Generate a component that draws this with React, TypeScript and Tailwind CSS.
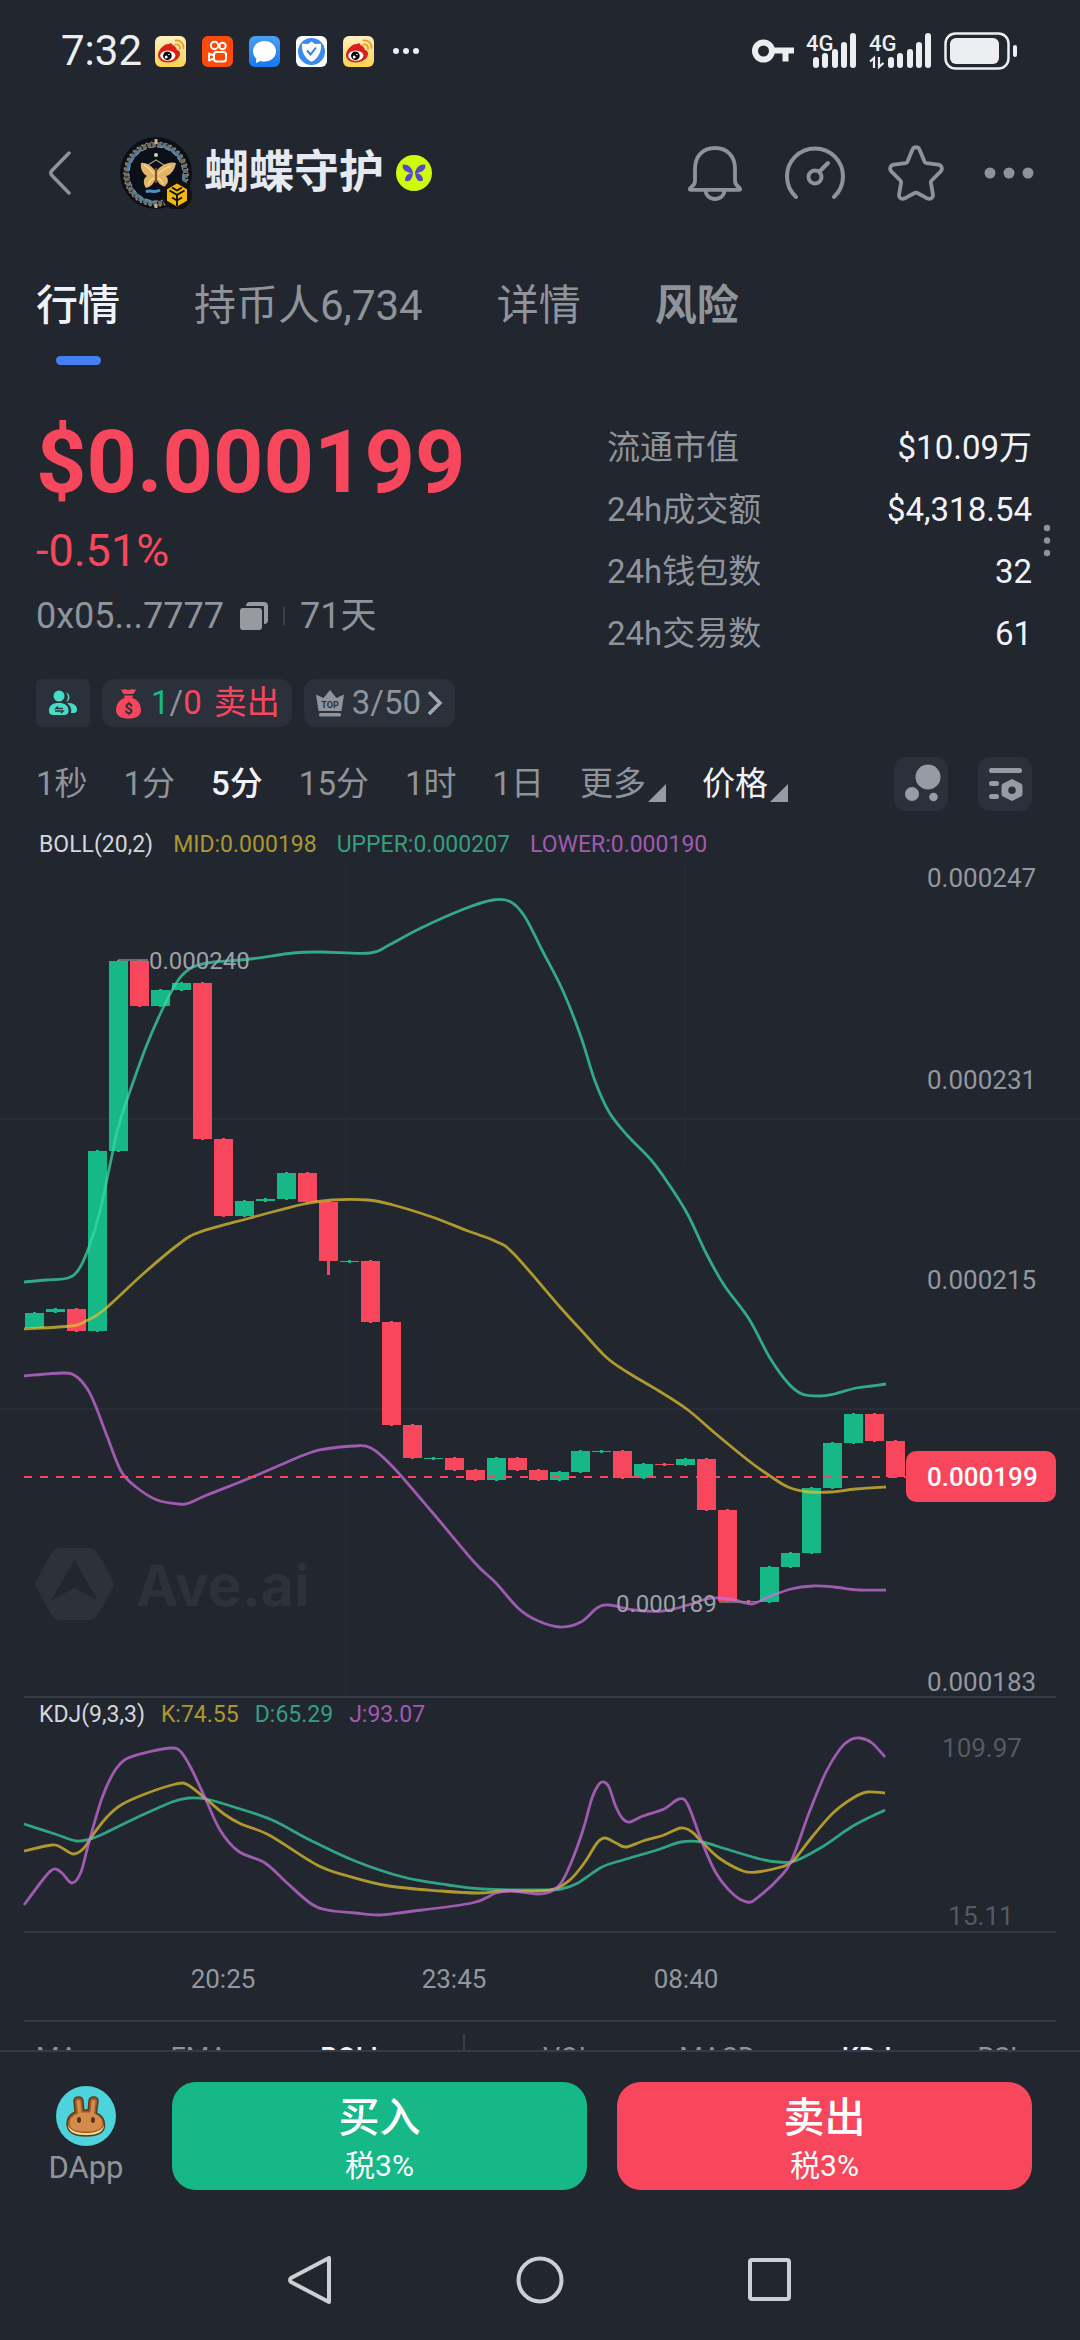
import React from "react";

type Pt = [number, number];

/* Smooth curve through the sample points (Catmull-Rom converted to Béziers). */
function smooth(points: Pt[]): string {
  let d = `M${points[0][0]} ${points[0][1]}`;
  for (let i = 0; i < points.length - 1; i++) {
    const p0 = points[i - 1] ?? points[i];
    const p1 = points[i];
    const p2 = points[i + 1];
    const p3 = points[i + 2] ?? p2;
    const c1x = p1[0] + (p2[0] - p0[0]) / 6;
    const c1y = p1[1] + (p2[1] - p0[1]) / 6;
    const c2x = p2[0] - (p3[0] - p1[0]) / 6;
    const c2y = p2[1] - (p3[1] - p1[1]) / 6;
    d += `C${c1x.toFixed(1)} ${c1y.toFixed(1)} ${c2x.toFixed(1)} ${c2y.toFixed(1)} ${p2[0]} ${p2[1]}`;
  }
  return d;
}

const GREEN = "#15b886";
const RED = "#f8475d";

/* top, bottom, direction, optional lower wick */
const candles: [number, number, "u" | "d", number?][] = [
  [453, 468, "u"], [449, 452, "u"], [449, 471, "d"], [291, 471, "u"], [101, 291, "u"],
  [101, 146, "d"], [130, 146, "u"], [123, 130, "u"], [123, 279, "d"], [279, 356, "d"],
  [341, 356, "u"], [339, 341, "u"], [313, 339, "u"], [313, 342, "d"], [342, 401, "d", 415],
  [401, 402, "u"], [401, 462, "d"], [462, 565, "d"], [565, 598, "d"], [598, 599, "u"],
  [598, 610, "d"], [610, 620, "d"], [598, 620, "u"], [598, 610, "d"], [610, 620, "d"],
  [612, 620, "u"], [591, 612, "u"], [591, 592, "u"], [591, 618, "d"], [604, 618, "u"],
  [604, 605, "d"], [599, 605, "u"], [599, 650, "d"], [650, 741, "d"], [741, 742, "d"],
  [707, 742, "u"], [693, 707, "u"], [628, 693, "u"], [583, 628, "u"], [554, 583, "u"],
  [554, 581, "d"], [581, 617, "d"],
];

const upper: Pt[] = [
  [24, 422], [46, 420], [68, 418], [79, 409], [89, 387], [100, 351], [111, 300], [118, 268], [129, 234],
  [146, 187], [164, 146], [179, 119], [193, 107], [214, 102], [250, 99], [293, 93], [321, 92], [370, 93],
  [389, 85], [421, 68], [464, 49], [493, 40], [511, 42], [525, 57], [542, 90], [563, 131], [581, 177],
  [595, 221], [609, 252], [627, 275], [652, 301], [670, 326], [688, 355], [706, 393], [724, 425],
  [749, 459], [770, 498], [788, 523], [802, 534], [820, 536], [834, 534], [856, 528], [872, 526], [886, 524],
];
const mid: Pt[] = [
  [24, 469], [71, 466], [86, 461], [104, 450], [143, 414], [179, 384], [200, 372], [250, 358], [304, 344],
  [332, 340], [368, 340], [393, 345], [432, 357], [468, 371], [495, 381], [514, 394], [560, 447],
  [581, 470], [606, 497], [627, 512], [659, 531], [688, 550], [716, 574], [749, 601], [770, 616],
  [788, 627], [809, 632], [831, 632], [856, 629], [886, 627],
];
const lower: Pt[] = [
  [24, 516], [64, 513], [77, 517], [88, 530], [96, 547], [107, 576], [121, 611], [136, 627], [157, 640],
  [179, 644], [189, 643], [207, 635], [250, 618], [304, 595], [325, 589], [354, 586], [371, 588],
  [393, 607], [432, 652], [475, 703], [495, 722], [518, 748], [536, 760], [560, 767], [581, 762],
  [597, 748], [609, 745], [634, 750], [663, 751], [688, 745], [706, 739], [720, 738], [734, 740],
  [752, 744], [766, 738], [791, 729], [813, 726], [834, 727], [859, 730], [886, 730],
];
const kLine: Pt[] = [
  [24, 153], [52, 147], [62, 150], [73, 156], [83, 151], [95, 134], [107, 119], [121, 107], [145, 96],
  [176, 86], [188, 87], [206, 101], [224, 116], [241, 126], [269, 137], [317, 167], [348, 178],
  [389, 188], [441, 193], [479, 195], [503, 193], [540, 193], [557, 190], [571, 181], [585, 164],
  [597, 145], [605, 140], [616, 145], [626, 149], [643, 143], [664, 137], [681, 130], [692, 134],
  [702, 144], [719, 160], [743, 173], [757, 174], [781, 169], [793, 163], [812, 139], [833, 115],
  [853, 100], [867, 94], [885, 95],
];
const dLine: Pt[] = [
  [24, 126], [55, 136], [76, 143], [90, 141], [103, 136], [138, 119], [172, 104], [189, 100], [206, 101],
  [234, 109], [272, 122], [310, 142], [355, 163], [403, 179], [448, 187], [482, 191], [540, 192],
  [561, 191], [578, 185], [602, 169], [623, 162], [657, 152], [681, 144], [702, 144], [726, 151],
  [760, 161], [778, 164], [795, 163], [822, 149], [853, 128], [885, 112],
];
const jLine: Pt[] = [
  [24, 207], [45, 179], [54, 171], [62, 175], [72, 185], [81, 174], [89, 144], [102, 100], [114, 74],
  [126, 61], [148, 54], [172, 50], [181, 54], [191, 70], [206, 102], [220, 132], [238, 153], [265, 165],
  [286, 184], [310, 205], [327, 212], [355, 215], [379, 217], [406, 214], [472, 205], [496, 195],
  [513, 193], [537, 196], [550, 194], [561, 185], [571, 165], [583, 132], [592, 100], [599, 86],
  [604, 84], [609, 89], [616, 109], [623, 121], [630, 124], [643, 118], [664, 111], [679, 101],
  [688, 107], [702, 144], [716, 175], [733, 196], [747, 204], [757, 200], [781, 178], [793, 159],
  [809, 115], [826, 74], [840, 51], [850, 42], [860, 40], [872, 45], [885, 59],
];

const Weibo = () => (
  <svg viewBox="0 0 31 31" className="size-[31px]">
    <defs>
      <linearGradient id="wb" x1="0" y1="0" x2="0" y2="1">
        <stop offset="0" stopColor="#fff0c4" />
        <stop offset="1" stopColor="#fdd24f" />
      </linearGradient>
    </defs>
    <rect width="31" height="31" rx="6" fill="url(#wb)" />
    <path d="M3 19c0-5 6-11 10-11 2.500 0 3 2 2.300 3.500 2.500-1.200 7-1.200 6.200 2.300 2 .6 3.500 1.700 3.500 4C25 23 19 26.500 13 26.500S3 23.500 3 19z" fill="#dd1f1c" />
    <path d="M14 8c1.500-1.500 3.500-1 3.500 1.500 1 -.5 3 0 2.500 3l-6 1z" fill="#dd1f1c" />
    <ellipse cx="12.800" cy="19.600" rx="7.600" ry="5.200" fill="#fff" />
    <circle cx="12.400" cy="19.800" r="4.300" fill="#000" />
    <circle cx="11.200" cy="21" r="1.500" fill="#fff" />
    <circle cx="14" cy="18.500" r=".8" fill="#fff" />
    <path d="M20.500 8.500c3-.5 5 1.500 4.500 4.500M20.500 4.500c5-.7 8.500 3 8 7.500" fill="none" stroke="#f39a1f" strokeWidth="1.800" strokeLinecap="round" />
  </svg>
);

const Kuaishou = () => (
  <svg viewBox="0 0 31 31" className="size-[31px]">
    <rect width="31" height="31" rx="6" fill="#fb4a0c" />
    <g fill="none" stroke="#fff" strokeWidth="2">
      <circle cx="12.500" cy="9.500" r="3.700" />
      <circle cx="20.500" cy="10" r="3.200" />
      <rect x="12" y="16" width="12" height="9.500" rx="2.500" />
      <path d="M12 19.500 7 17.500v7l5-2z" strokeLinejoin="round" />
    </g>
  </svg>
);

const ChatApp = () => (
  <svg viewBox="0 0 31 31" className="size-[31px]">
    <defs>
      <linearGradient id="ch" x1="0" y1="0" x2="0" y2="1">
        <stop offset="0" stopColor="#4d9df5" />
        <stop offset="1" stopColor="#1678f2" />
      </linearGradient>
    </defs>
    <rect width="31" height="31" rx="6" fill="url(#ch)" />
    <path d="M15.500 5C22 5 27 9.500 27 15.300S22 25.500 15.500 25.500c-1.500 0-2.800-.2-4-.6L7 27l.3-4.200C5.300 21 4 18.500 4 15.300 4 9.500 9 5 15.500 5z" fill="#fff" />
  </svg>
);

const ShieldApp = () => (
  <svg viewBox="0 0 31 31" className="size-[31px]">
    <rect width="31" height="31" rx="6" fill="#fff" />
    <circle cx="15.500" cy="15.500" r="13.500" fill="#3a8af0" />
    <path d="M15.500 5.500 19 8l6-.3c.8 7-2.500 15-9.500 18C8.500 22.700 5.200 14.700 6 7.700L12 8z" fill="#fff" />
    <path d="m11 14.500 3.500 4 5.500-7" fill="none" stroke="#2f80ed" strokeWidth="2" />
  </svg>
);

const Signal = ({ data }: { data?: boolean }) => {
  const x = data ? 19 : 7;
  return (
    <svg viewBox={data ? "0 -6 63 48" : "0 -6 51 48"} className={data ? "h-12 w-[63px]" : "h-12 w-[51px]"}>
      <text x="0" y="18" fontSize="22" fontWeight="500" fill="#eceef2">4G</text>
      <g fill="#eceef2">
        <rect x={x} y="24" width="6" height="11" rx="3" />
        <rect x={x + 9} y="20" width="6" height="15" rx="3" />
        <rect x={x + 19} y="16" width="6" height="19" rx="3" />
        <rect x={x + 28} y="9" width="6" height="26" rx="3" />
        <rect x={x + 37} y="0" width="6" height="35" rx="3" />
      </g>
      {data && <path d="M1 28.500 5 25v10M10 24v10l4.500-4" fill="none" stroke="#eceef2" strokeWidth="2.200" />}
    </svg>
  );
};

function StatusBar() {
  return (
    <div className="flex items-center justify-between pt-[26px] pr-[62px] pl-[61px] text-[#eceef2]">
      <div className="flex items-center">
        <span className="mr-[13px] text-[42px] leading-[50px]">7:32</span>
        <div className="flex items-center gap-4">
          <Weibo />
          <Kuaishou />
          <ChatApp />
          <ShieldApp />
          <Weibo />
        </div>
        <svg viewBox="0 0 30 8" className="ml-[17px] h-2 w-[30px]" fill="#eceef2">
          <circle cx="5" cy="4" r="3" />
          <circle cx="15" cy="4" r="3" />
          <circle cx="25" cy="4" r="3" />
        </svg>
      </div>
      <div className="flex items-center gap-3">
        <svg viewBox="0 0 42 24" className="h-6 w-[42px]">
          <circle cx="11.500" cy="12" r="8.500" fill="none" stroke="#eceef2" strokeWidth="6" />
          <path d="M20 8.500h22v6h-5.500v8h-6v-8H20z" fill="#eceef2" />
        </svg>
        <Signal />
        <Signal data />
        <svg viewBox="0 0 74 38" className="h-[38px] w-[74px]">
          <rect x="1.500" y="1.500" width="63" height="35" rx="10" fill="none" stroke="#eceef2" strokeWidth="2.500" />
          <rect x="6" y="6" width="49" height="26" rx="6" fill="#eceef2" />
          <rect x="69" y="13" width="4" height="12" rx="2" fill="#eceef2" />
        </svg>
      </div>
    </div>
  );
}

const Avatar = () => (
  <svg viewBox="0 0 72 72" className="size-[72px]">
    <circle cx="36" cy="36" r="36" fill="#0b0f19" />
    <circle cx="36" cy="37" r="29.500" fill="none" stroke="#6f6c62" strokeWidth="5" strokeDasharray="4 1" />
    <circle cx="36" cy="37" r="32" fill="none" stroke="#9a8b68" strokeWidth="1.500" strokeDasharray="2 3" />
    <circle cx="36" cy="37" r="28.500" fill="none" stroke="#4d7fa3" strokeWidth="2.500" strokeDasharray="26 20" />
    <circle cx="36" cy="37" r="27" fill="none" stroke="#8f9aa0" strokeWidth="1" strokeDasharray="5 3" />
    <path d="M36 2v5M36 67v4" stroke="#c9b078" strokeWidth="3" />
    <path d="M26 55c4-3 8 2 14-2" fill="none" stroke="#4b8fc4" strokeWidth="3" />
    <circle cx="36" cy="18" r="2" fill="#d9cfae" />
    <path d="m28 28 8-5 8 5" fill="none" stroke="#a39a83" strokeWidth="1.200" />
    <path d="M35.500 34C31 28 25 25 21 26c-1 6 2 11 6 13-4 2-4 8-1 12 5-1 8-5 9.500-9zM36.500 34C41 28 49 24 56 26c-1 6-5 12-10 13 3 3 2 7 0 11-5-1-8-4-9.500-8z" fill="#e2b565" />
    <path d="M34 37c-3-4-6-7-10-9M38 37c4-4 8-6 13-8M34 41c-3 1-5 4-6 7M38 41c3 1 4 4 5 6" fill="none" stroke="#f5dfa4" strokeWidth="1.300" />
    <path d="M36 31v15" stroke="#7b5526" strokeWidth="1.800" />
    <circle cx="57" cy="58" r="15" fill="#14110b" />
    <path d="m57 46.500 10 5.700v11.600l-10 5.700-10-5.700V52.200z" fill="#f0b90b" />
    <path d="m49.500 53.500 7.500 4.300 7.500-4.300M57 58v5M52 60.500l5 3 5-3M57 64v5M52 50.500l5 3 5-3" fill="none" stroke="#14110b" strokeWidth="1.900" />
  </svg>
);

function TitleBar() {
  return (
    <header className="mt-[61px] flex items-center justify-between pr-[46px] pl-12">
      <div className="flex items-center">
        <button aria-label="返回" className="mr-[49px]">
          <svg viewBox="0 0 23 44" className="h-11 w-[23px]" fill="none" stroke="#8f949b" strokeWidth="3.500" strokeLinecap="round" strokeLinejoin="round">
            <path d="M21 2 4 19.500q-2.500 2.500 0 5L21 42" />
          </svg>
        </button>
        <Avatar />
        <h1 className="ml-[12px] text-[45px] leading-[54px] font-bold text-[#e7e9f0]">蝴蝶守护</h1>
        <svg viewBox="0 0 36 36" className="ml-[12px] size-9">
          <circle cx="18" cy="18" r="18" fill="#cdfb0a" />
          <g fill="#5847c9">
            <path d="M17 18c-1-6-5-9-10-8.500-1.500 4 2 7.500 8 8.500zM19 18c1-6 5-9 10-8.500 1.500 4-2 7.500-8 8.500zM17 18c-5 0-8 3-8 7.500 3.500 2 7 0 8-7.500zM19 18c5 0 8 3 8 7.500-3.500 2-7 0-8-7.500z" />
          </g>
          <path d="M18 12v12" stroke="#cdfb0a" strokeWidth="1.800" />
        </svg>
      </div>
      <div className="flex items-center gap-10">
        <div className="flex items-center gap-[43px]">
          <button aria-label="提醒">
            <svg viewBox="0 0 54 56" className="h-14 w-[54px]" fill="none" stroke="#8f929d" strokeWidth="3.800" strokeLinejoin="round">
              <path d="M7 24C7 11 15 3 27 3s20 8 20 21v12c0 3 1 4 3.500 6 3 2.500 1.500 2.800 0 2.800h-47c-1.500 0-3-.3 0-2.800C6 40 7 39 7 36z" />
              <path d="M17.500 45c0 5 4 9 9.500 9s9.500-4 9.500-9" />
            </svg>
          </button>
          <button aria-label="仪表盘">
            <svg viewBox="0 0 60 56" className="h-14 w-[60px]" fill="none" stroke="#8f929d" strokeWidth="4" strokeLinecap="round">
              <path d="M11 52A28 28 0 1 1 49 52" />
              <circle cx="30" cy="32" r="6.500" />
              <path d="m35 26 8-8" />
            </svg>
          </button>
          <button aria-label="收藏">
            <svg viewBox="0 0 56 56" className="size-14" fill="none" stroke="#8f929d" strokeWidth="3.800" strokeLinejoin="round">
              <path d="M24.500 4.500c1.500-3 5.500-3 7 0l5 12c.4 1 1 1.400 2 1.600l11.500 1.600c4 .6 5 4.500 2.500 7L43.600 35.500c-.7.7-.9 1.300-.7 2.300l2 11.500c.6 3.700-2.700 5.500-5.700 4L29.500 48c-1-.6-2-.6-3 0l-9.700 5.300c-3 1.500-6.300-.3-5.700-4l2-11.500c.2-1 0-1.600-.7-2.300L3.500 26.700c-2.500-2.500-1.500-6.400 2.500-7l11.500-1.600c1-.2 1.600-.6 2-1.600z" />
            </svg>
          </button>
        </div>
        <button aria-label="更多">
          <svg viewBox="0 0 50 12" className="h-3 w-[50px]" fill="#8f929d">
            <circle cx="6" cy="6" r="5.500" />
            <circle cx="25" cy="6" r="5.500" />
            <circle cx="44" cy="6" r="5.500" />
          </svg>
        </button>
      </div>
    </header>
  );
}

function Tabs() {
  return (
    <nav className="mt-[72px] flex gap-[74px] pl-9 text-[42px] leading-[50px] font-medium text-[#8f949b]">
      <button className="flex flex-col items-center text-[#f0f2fa]">
        行情
        <span className="mt-[25px] h-[9px] w-[45px] rounded-full bg-[#4480f2]" />
      </button>
      <button className="self-start font-normal">持币人6,734</button>
      <button className="self-start font-normal">详情</button>
      <button className="self-start font-bold">风险</button>
    </nav>
  );
}

const stats: [string, string][] = [
  ["流通市值", "$10.09万"],
  ["24h成交额", "$4,318.54"],
  ["24h钱包数", "32"],
  ["24h交易数", "61"],
];

function Summary() {
  return (
    <section className="mt-[52px] flex pr-[29px] pl-9">
      <div className="flex-[571] pt-[3px]">
        <div className="text-[88px] leading-[84px] font-bold text-[#f8475d]">$0.000199</div>
        <div className="mt-[22px] text-[45px] leading-[50px] text-[#f8475d]">-0.51%</div>
        <div className="mt-5 flex items-center text-[36px] leading-[40px] text-[#8f949b]">
          <span>0x05...7777</span>
          <button aria-label="复制地址" className="ml-4">
            <svg viewBox="0 0 28 28" className="size-7" fill="#979ba1">
              <rect x="0" y="6" width="22" height="22" rx="3" />
              <path d="M6 4q0-4 4-4h14q4 0 4 4v14q0 4-4 4V5q0-1-1-1z" />
            </svg>
          </button>
          <span className="mx-[15px] h-[18px] w-[2px] bg-[#3a4049]" />
          <span>71天</span>
        </div>
      </div>
      <dl className="flex-[425] text-[33px] leading-[62px]">
        {stats.map(([k, v]) => (
          <div key={k} className="flex justify-between">
            <dt className="text-[#8f949b]">{k}</dt>
            <dd className="text-[#f0f2fa]">{v}</dd>
          </div>
        ))}
      </dl>
      <button aria-label="更多数据" className="ml-[11px] self-center">
        <svg viewBox="0 0 8 34" className="h-[34px] w-2" fill="#8f929d">
          <circle cx="4" cy="4" r="3.200" />
          <circle cx="4" cy="16.500" r="3.200" />
          <circle cx="4" cy="29" r="3.200" />
        </svg>
      </button>
    </section>
  );
}

function Chips() {
  return (
    <div className="mt-[14px] flex gap-3 pl-9 text-[33px] leading-[48px] text-[#8f949b]">
      <button aria-label="持有人" className="flex w-[54px] items-center justify-center rounded-md bg-[#2b313b]">
        <svg viewBox="0 0 28 26" className="h-[26px] w-7" fill="#46dcc8">
          <path d="M17 2.500a5 5 0 0 1 0 9.500 7 7 0 0 0 0-9.500zM20 13c5 0 8 3 8 6.500 0 3-1.500 3.500-6 3.500 1-4-.5-7.500-4-9.500z" />
          <circle cx="10" cy="6" r="5.500" />
          <path d="M9.500 13c6.500 0 10 2.500 10 7.500 0 3.500-1.500 4.500-5 4.500H5c-3.500 0-5-1-5-4.500C0 15.500 3.500 13 9.500 13z" />
          <path d="M14 18.500H7l2-2M6 21h8l-2 2" fill="none" stroke="#2b313b" strokeWidth="1.600" />
        </svg>
      </button>
      <button className="flex items-center rounded-xl bg-[#2b313b] pr-3 pl-[14px]">
        <svg viewBox="0 0 25 31" className="mr-[10px] h-[31px] w-[25px]">
          <path d="M5 1q2 1.500 4 0 3.500 2 7 0 2 1.500 4 0-.5 3.500-3 5H8Q5.500 4.500 5 1zM8 7.500h9q0 1.500-1 2 9 4 9 12.500c0 6-5 8.500-12.500 8.500S0 28 0 22Q0 13.500 9 9.500q-1-.5-1-2z" fill="#f8475d" />
          <text x="12.500" y="25.500" fontSize="15" fontWeight="700" textAnchor="middle" fill="#2b313b">$</text>
        </svg>
        <span className="text-[#15b886]">1</span>
        <span>/</span>
        <span className="text-[#f8475d]">0</span>
        <span className="ml-3 text-[#f8475d]">卖出</span>
      </button>
      <button className="flex items-center rounded-xl bg-[#2b313b] pr-3 pl-3">
        <svg viewBox="0 0 28 28" className="mr-2 h-7 w-7">
          <path d="M0 5.500 7.500 9 14 1l6.500 8L28 5.500 25.500 22h-23z" fill="#8f949b" />
          <rect x="3" y="24" width="22" height="3.500" rx="1.500" fill="#8f949b" />
          <text x="14" y="18.500" fontSize="9" fontWeight="700" textAnchor="middle" fill="#2b313b">TOP</text>
        </svg>
        <span>3/50</span>
        <svg viewBox="0 0 16 26" className="ml-[6px] h-[26px] w-4" fill="none" stroke="#a3a7ae" strokeWidth="3.500">
          <path d="m2 2 11 11L2 24" />
        </svg>
      </button>
    </div>
  );
}

const Corner = () => (
  <svg viewBox="0 0 18 18" className="ml-[2px] size-[18px] self-end" fill="#979ba3">
    <path d="M18 0v18H0z" />
  </svg>
);

function Timeframes() {
  return (
    <div className="mt-[30px] flex items-center justify-between pr-12 pl-9 text-[33px] leading-[36px] text-[#8f949b]">
      <div className="flex items-center gap-9">
        <button>1秒</button>
        <button>1分</button>
        <button className="font-medium text-[#f0f2fa]">5分</button>
        <button>15分</button>
        <button>1时</button>
        <button>1日</button>
        <button className="flex">更多<Corner /></button>
        <button className="flex text-[#f0f2fa]">价格<Corner /></button>
      </div>
      <div className="flex gap-[30px]">
        <button aria-label="气泡图" className="rounded-xl bg-[#2b313b]">
          <svg viewBox="0 0 54 54" className="size-[54px]" fill="#979ca4">
            <circle cx="34" cy="20" r="12.500" />
            <circle cx="18" cy="37" r="7" />
            <circle cx="39.500" cy="40" r="4.300" />
          </svg>
        </button>
        <button aria-label="图表设置" className="rounded-xl bg-[#2b313b]">
          <svg viewBox="0 0 54 54" className="size-[54px]" fill="#979ca4">
            <rect x="11" y="11" width="33" height="5" rx="2.500" />
            <rect x="11" y="24" width="10" height="5" rx="2.500" />
            <rect x="11" y="37" width="10" height="5" rx="2.500" />
            <path fillRule="evenodd" d="m34 22 9 4.500q1.500 1 1.500 2.500v8q0 1.500-1.500 2.500L34 44l-9-4.500q-1.500-1-1.500-2.500v-8q0-1.500 1.500-2.500zm0 7.500a3.800 3.800 0 1 0 0 7.600 3.800 3.800 0 0 0 0-7.600z" />
          </svg>
        </button>
      </div>
    </div>
  );
}

const axis: [string, number][] = [
  ["0.000247", 18],
  ["0.000231", 220],
  ["0.000215", 420],
  ["0.000183", 822],
];

function PriceChart() {
  return (
    <svg viewBox="0 0 1080 838" className="block h-auto w-full" role="img" aria-label="K线图">
      <path d="M0 259H1080M0 549H1080" stroke="#282e36" strokeWidth="2" />
      <path d="M346 0V838M685 0V306" stroke="#252a32" strokeWidth="2" />
      <path d="M24 837H1056" stroke="#353b44" strokeWidth="2" />
      <g fill="#2c323a">
        <path fillRule="evenodd" d="M60 688h29q5 0 8 4l15 27q3 5 0 10l-15 27q-3 4-8 4H60q-5 0-8-4L37 729q-3-5 0-10l15-27q3-4 8-4zm14.500 12-23 40 23-12 23 12z" />
        <text x="136" y="746" fontSize="57" fontWeight="700" fontFamily="Inter, sans-serif">Ave.ai</text>
      </g>
      {candles.map(([t, b, dir, wick], i) => {
        const x = 34 + i * 21;
        const color = dir === "u" ? GREEN : RED;
        return (
          <g key={i} fill={color}>
            <rect x={x - 9} y={t} width="19" height={b - t} />
            <rect x={x - 1} y={t - 1} width="3" height={(wick ?? b + 1) - t + 1} />
          </g>
        );
      })}
      <g fill="none" strokeWidth="2.800" strokeLinejoin="round">
        <path d={smooth(upper)} stroke="#38d6a8" strokeOpacity=".75" />
        <path d={smooth(mid)} stroke="#dcc02f" strokeOpacity=".75" />
        <path d={smooth(lower)} stroke="#c86ddc" strokeOpacity=".75" />
        <path d="M24 617H906" stroke="#f8475d" strokeWidth="2" strokeDasharray="8 8" />
        <path d="M118 100H148M719 742H745" stroke="#80858c" strokeWidth="1.500" />
      </g>
      <g fontSize="24" fill="#9da1a8">
        <text x="149" y="109">0.000240</text>
        <text x="616" y="752">0.000189</text>
      </g>
      <g fontSize="26" fill="#9398a0">
        {axis.map(([label, y]) => (
          <text key={label} x="927" y={y + 9}>{label}</text>
        ))}
      </g>
      <rect x="906" y="591" width="150" height="51" rx="10" fill="#f8475d" />
      <text x="927" y="626" fontSize="26" fontWeight="500" fill="#fff">0.000199</text>
    </svg>
  );
}

function KdjChart() {
  return (
    <svg viewBox="0 32 1080 292" className="block h-auto w-full" role="img" aria-label="KDJ指标">
      <g fill="none" strokeWidth="2.800" strokeLinejoin="round">
        <path d={smooth(dLine)} stroke="#38d6a8" strokeOpacity=".72" />
        <path d={smooth(kLine)} stroke="#dcc02f" strokeOpacity=".75" />
        <path d={smooth(jLine)} stroke="#c86ddc" strokeOpacity=".75" />
      </g>
      <path d="M24 234H1056M24 323H1056" stroke="#353b44" strokeWidth="2" />
      <g fontSize="26" fill="#555a61" textAnchor="middle">
        <text x="982" y="59">109.97</text>
        <text x="981" y="227">15.11</text>
      </g>
      <g fontSize="26" fill="#9398a0" textAnchor="middle">
        <text x="223" y="290">20:25</text>
        <text x="454" y="290">23:45</text>
        <text x="686" y="290">08:40</text>
      </g>
    </svg>
  );
}

function IndicatorTabs() {
  return (
    <div className="flex h-[28px] overflow-hidden pl-9 text-[27px] leading-[40px] text-[#8f949b]">
      <div className="flex gap-[93px] pt-4">
        <button>MA</button>
        <button>EMA</button>
        <button className="font-medium text-[#f0f2fa]">BOLL</button>
      </div>
      <span className="mx-[78px] mt-3 w-[2px] shrink-0 bg-[#3a4049]" />
      <div className="flex gap-[86px] pt-4">
        <button>VOL</button>
        <button>MACD</button>
        <button className="font-medium text-[#f0f2fa]">KDJ</button>
        <button>RSI</button>
      </div>
    </div>
  );
}

function BottomBar() {
  return (
    <footer className="flex items-center border-t-2 border-[#353b44] pt-[30px] pr-12">
      <button className="flex w-[172px] flex-col items-center text-[31px] leading-[36px] text-[#8f949b]">
        <svg viewBox="0 0 60 60" className="mb-1 size-[60px]">
          <circle cx="30" cy="30" r="30" fill="#4cd3dc" />
          <path d="M18 15q0-4 4.500-4 4 0 4.500 4l.7 9h4.600l.7-9q.5-4 4.500-4 4.500 0 4.500 4l-1.500 12q8 4 8 12 0 11-18.500 11T11 38q0-8 8-12z" fill="#9a5b2a" stroke="#5f3a20" strokeWidth="1.500" />
          <path d="M20.500 15q2-2.500 4 0l1 11.500h9l1-11.500q2-2.500 4 0l-1.500 12.500q8.500 3 8.500 10 0 8-16.500 8t-16.500-8q0-7 8.500-10z" fill="#d48b4c" />
          <path d="M12 39q3 8 18 8t18-8q0 10-18 10T12 39z" fill="#f8dc9a" />
          <ellipse cx="23" cy="34" rx="2" ry="3" fill="#5b3216" />
          <ellipse cx="37" cy="34" rx="2" ry="3" fill="#5b3216" />
        </svg>
        DApp
      </button>
      <div className="flex flex-1 gap-[30px] text-white">
        <button className="flex flex-1 flex-col items-center rounded-3xl bg-[#15b886] pt-[9px] pb-[3px]">
          <span className="text-[41px] leading-[54px] font-medium">买入</span>
          <span className="text-[30px] leading-[42px]">税3%</span>
        </button>
        <button className="flex flex-1 flex-col items-center rounded-3xl bg-[#f8475d] pt-[9px] pb-[3px]">
          <span className="text-[41px] leading-[54px] font-medium">卖出</span>
          <span className="text-[30px] leading-[42px]">税3%</span>
        </button>
      </div>
    </footer>
  );
}

function SystemNav() {
  return (
    <div className="flex justify-center gap-[182px] pt-[66px] pb-8">
      <button aria-label="系统返回">
        <svg viewBox="0 0 48 48" className="size-12" fill="none" stroke="#cdcfd4" strokeWidth="4" strokeLinejoin="round">
          <path d="M43 2v44L5 26q-2-2 0-4z" />
        </svg>
      </button>
      <button aria-label="主屏幕">
        <svg viewBox="0 0 48 48" className="size-12" fill="none" stroke="#cdcfd4" strokeWidth="4">
          <circle cx="24" cy="24" r="21.500" />
        </svg>
      </button>
      <button aria-label="最近任务">
        <svg viewBox="0 0 48 48" className="size-12" fill="none" stroke="#cdcfd4" strokeWidth="4">
          <rect x="4" y="4" width="39" height="39" rx="2" />
        </svg>
      </button>
    </div>
  );
}

export default function App() {
  return (
    <div className="min-h-screen bg-[#22262e] font-['Roboto','Noto_Sans_CJK_SC',sans-serif]">
      <StatusBar />
      <TitleBar />
      <Tabs />
      <Summary />
      <Chips />
      <Timeframes />
      <div className="mt-[18px] flex gap-5 pl-[39px] text-[23px] leading-[31px]">
        <span className="text-[#d3d6db]">BOLL(20,2)</span>
        <span className="text-[#ac9830]">MID:0.000198</span>
        <span className="text-[#369e80]">UPPER:0.000207</span>
        <span className="text-[#a05bb0]">LOWER:0.000190</span>
      </div>
      <PriceChart />
      <div className="flex gap-4 pt-[2px] pl-[39px] text-[23px] leading-[30px]">
        <span className="text-[#d3d6db]">KDJ(9,3,3)</span>
        <span className="text-[#ac9830]">K:74.55</span>
        <span className="text-[#369e80]">D:65.29</span>
        <span className="text-[#a05bb0]">J:93.07</span>
      </div>
      <KdjChart />
      <IndicatorTabs />
      <BottomBar />
      <SystemNav />
    </div>
  );
}
